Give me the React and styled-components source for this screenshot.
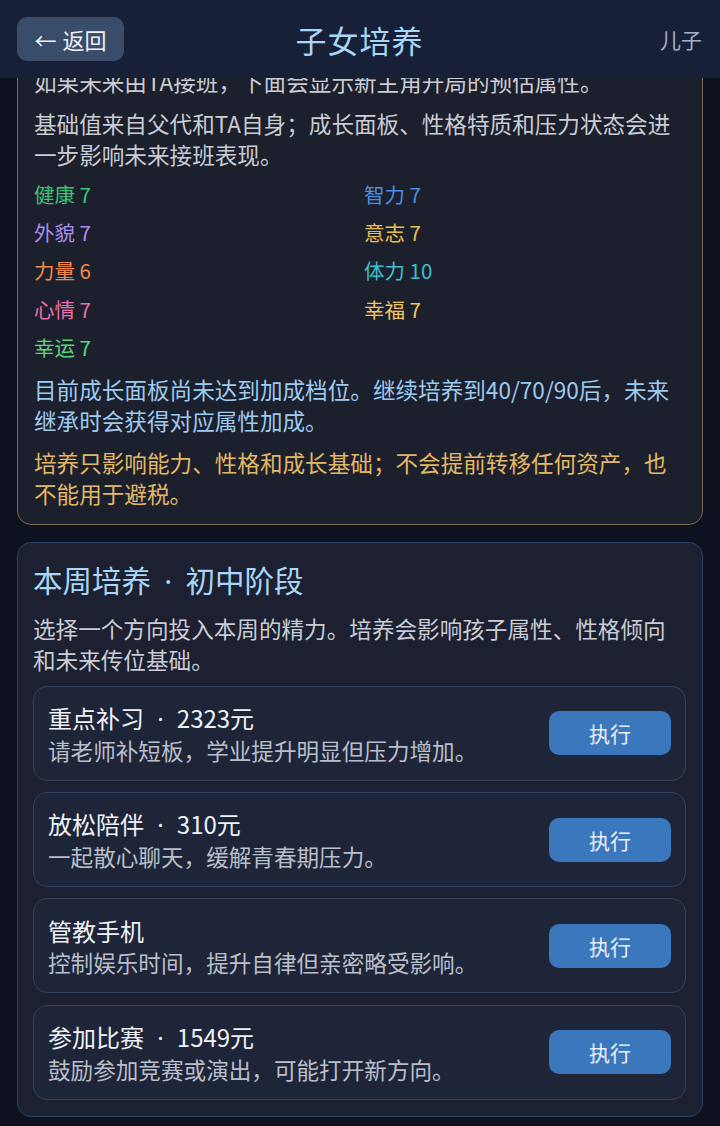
import React from "react";
import styled, { createGlobalStyle } from "styled-components";

const GlobalStyle = createGlobalStyle`
  html, body {
    margin: 0;
    padding: 0;
    background: #0e1220;
  }
  body {
    font-family: "Noto Sans CJK SC", "Noto Sans", sans-serif;
    color: #c9ccd4;
  }
  * { box-sizing: border-box; }
`;

const Header = styled.header`
  position: fixed;
  top: 0;
  left: 0;
  right: 0;
  height: 78px;
  z-index: 10;
  background: #172037;
  display: grid;
  grid-template-columns: 1fr auto 1fr;
  align-items: center;
  padding: 0 18px 0 17px;
`;

const BackButton = styled.button`
  justify-self: start;
  width: 107px;
  height: 44px;
  border: none;
  border-radius: 10px;
  background: #394c6a;
  color: #eef2f8;
  font-family: inherit;
  font-size: 22px;
  display: flex;
  align-items: center;
  justify-content: center;
  gap: 6px;
  padding: 0;
`;

const Title = styled.h1`
  margin: 0;
  font-size: 31px;
  font-weight: 400;
  color: #a9d6f7;
  letter-spacing: 1px;
`;

const Side = styled.span`
  justify-self: end;
  font-size: 21px;
  color: #a4b2c8;
`;

const Page = styled.main`
  padding: 49px 17px 10px;
  display: flex;
  flex-direction: column;
  gap: 17px;
`;

const Card = styled.section`
  border: 1px solid ${(p) => p.$border};
  background: ${(p) => p.$bg};
  border-radius: 14px;
  padding: ${(p) => p.$pad};
  display: flex;
  flex-direction: column;
  gap: 11px;
`;

const Para = styled.p`
  margin: 0;
  font-size: 22.6px;
  line-height: 31px;
  color: ${(p) => p.$color || "#c9ccd4"};
`;

const StatGrid = styled.div`
  display: grid;
  grid-template-columns: 1fr 1fr;
  column-gap: 8px;
  row-gap: 9.2px;
  margin: -1px 0 1px;
`;

const Stat = styled.div`
  font-size: 20.5px;
  line-height: 29px;
  color: ${(p) => p.$color};
`;

const CardTitle = styled.h2`
  margin: 0 0 1px;
  font-size: 29.5px;
  line-height: 40px;
  font-weight: 400;
  color: #a9d6f7;
`;

const Dot = styled.span`
  font-family: "Noto Sans", sans-serif;
  padding: 0 ${(p) => p.$pad || "0.5em"};
`;

const Item = styled.div`
  border: 1px solid #33415c;
  background: #1f2538;
  border-radius: 14px;
  height: 95px;
  padding: 0 14px 0 14px;
  display: flex;
  align-items: center;
  justify-content: space-between;
`;

const ItemText = styled.div`
  display: flex;
  flex-direction: column;
`;

const ItemTitle = styled.div`
  font-size: 24px;
  line-height: 33px;
  color: #eef1f6;
`;

const ItemDesc = styled.div`
  font-size: 22.6px;
  line-height: 31px;
  color: #b9bfca;
`;

const ActionButton = styled.button`
  width: 122px;
  height: 44px;
  border: none;
  border-radius: 10px;
  background: #3b77bd;
  color: #e8f0fa;
  font-family: inherit;
  font-size: 21px;
  padding: 0;
`;

const ItemList = styled.div`
  display: flex;
  flex-direction: column;
  gap: 11.3px;
`;

const stats = [
  ["健康 7", "#3fc27a"],
  ["智力 7", "#4b8fe0"],
  ["外貌 7", "#a98cf0"],
  ["意志 7", "#e6bf52"],
  ["力量 6", "#f0894c"],
  ["体力 10", "#3fbfd0"],
  ["心情 7", "#ea6fb0"],
  ["幸福 7", "#f0c75c"],
  ["幸运 7", "#5ed47e"],
];

const items = [
  ["重点补习", "2323元", "请老师补短板，学业提升明显但压力增加。"],
  ["放松陪伴", "310元", "一起散心聊天，缓解青春期压力。"],
  ["管教手机", null, "控制娱乐时间，提升自律但亲密略受影响。"],
  ["参加比赛", "1549元", "鼓励参加竞赛或演出，可能打开新方向。"],
];

export default function App() {
  return (
    <>
      <GlobalStyle />
      <Header>
        <BackButton>
          <span>←</span>
          <span>返回</span>
        </BackButton>
        <Title>子女培养</Title>
        <Side>儿子</Side>
      </Header>
      <Page>
        <Card $border="#77684a" $bg="#1c1f2c" $pad="16px 16px 15px">
          <Para>如果未来由TA接班，下面会显示新主角开局的预估属性。</Para>
          <Para>基础值来自父代和TA自身；成长面板、性格特质和压力状态会进一步影响未来接班表现。</Para>
          <StatGrid>
            {stats.map(([label, color]) => (
              <Stat key={label} $color={color}>{label}</Stat>
            ))}
          </StatGrid>
          <Para $color="#9ccbf0">目前成长面板尚未达到加成档位。继续培养到40/70/90后，未来继承时会获得对应属性加成。</Para>
          <Para $color="#e2b866">培养只影响能力、性格和成长基础；不会提前转移任何资产，也不能用于避税。</Para>
        </Card>
        <Card $border="#2c4266" $bg="#1c2030" $pad="16px 16px 16px 15px">
          <CardTitle>本周培养<Dot $pad="0.45em">·</Dot>初中阶段</CardTitle>
          <Para>选择一个方向投入本周的精力。培养会影响孩子属性、性格倾向和未来传位基础。</Para>
          <ItemList>
            {items.map(([t, price, d]) => (
              <Item key={t}>
                <ItemText>
                  <ItemTitle>
                    {t}
                    {price && (
                      <>
                        <Dot $pad="0.55em">·</Dot>
                        {price}
                      </>
                    )}
                  </ItemTitle>
                  <ItemDesc>{d}</ItemDesc>
                </ItemText>
                <ActionButton>执行</ActionButton>
              </Item>
            ))}
          </ItemList>
        </Card>
      </Page>
    </>
  );
}
